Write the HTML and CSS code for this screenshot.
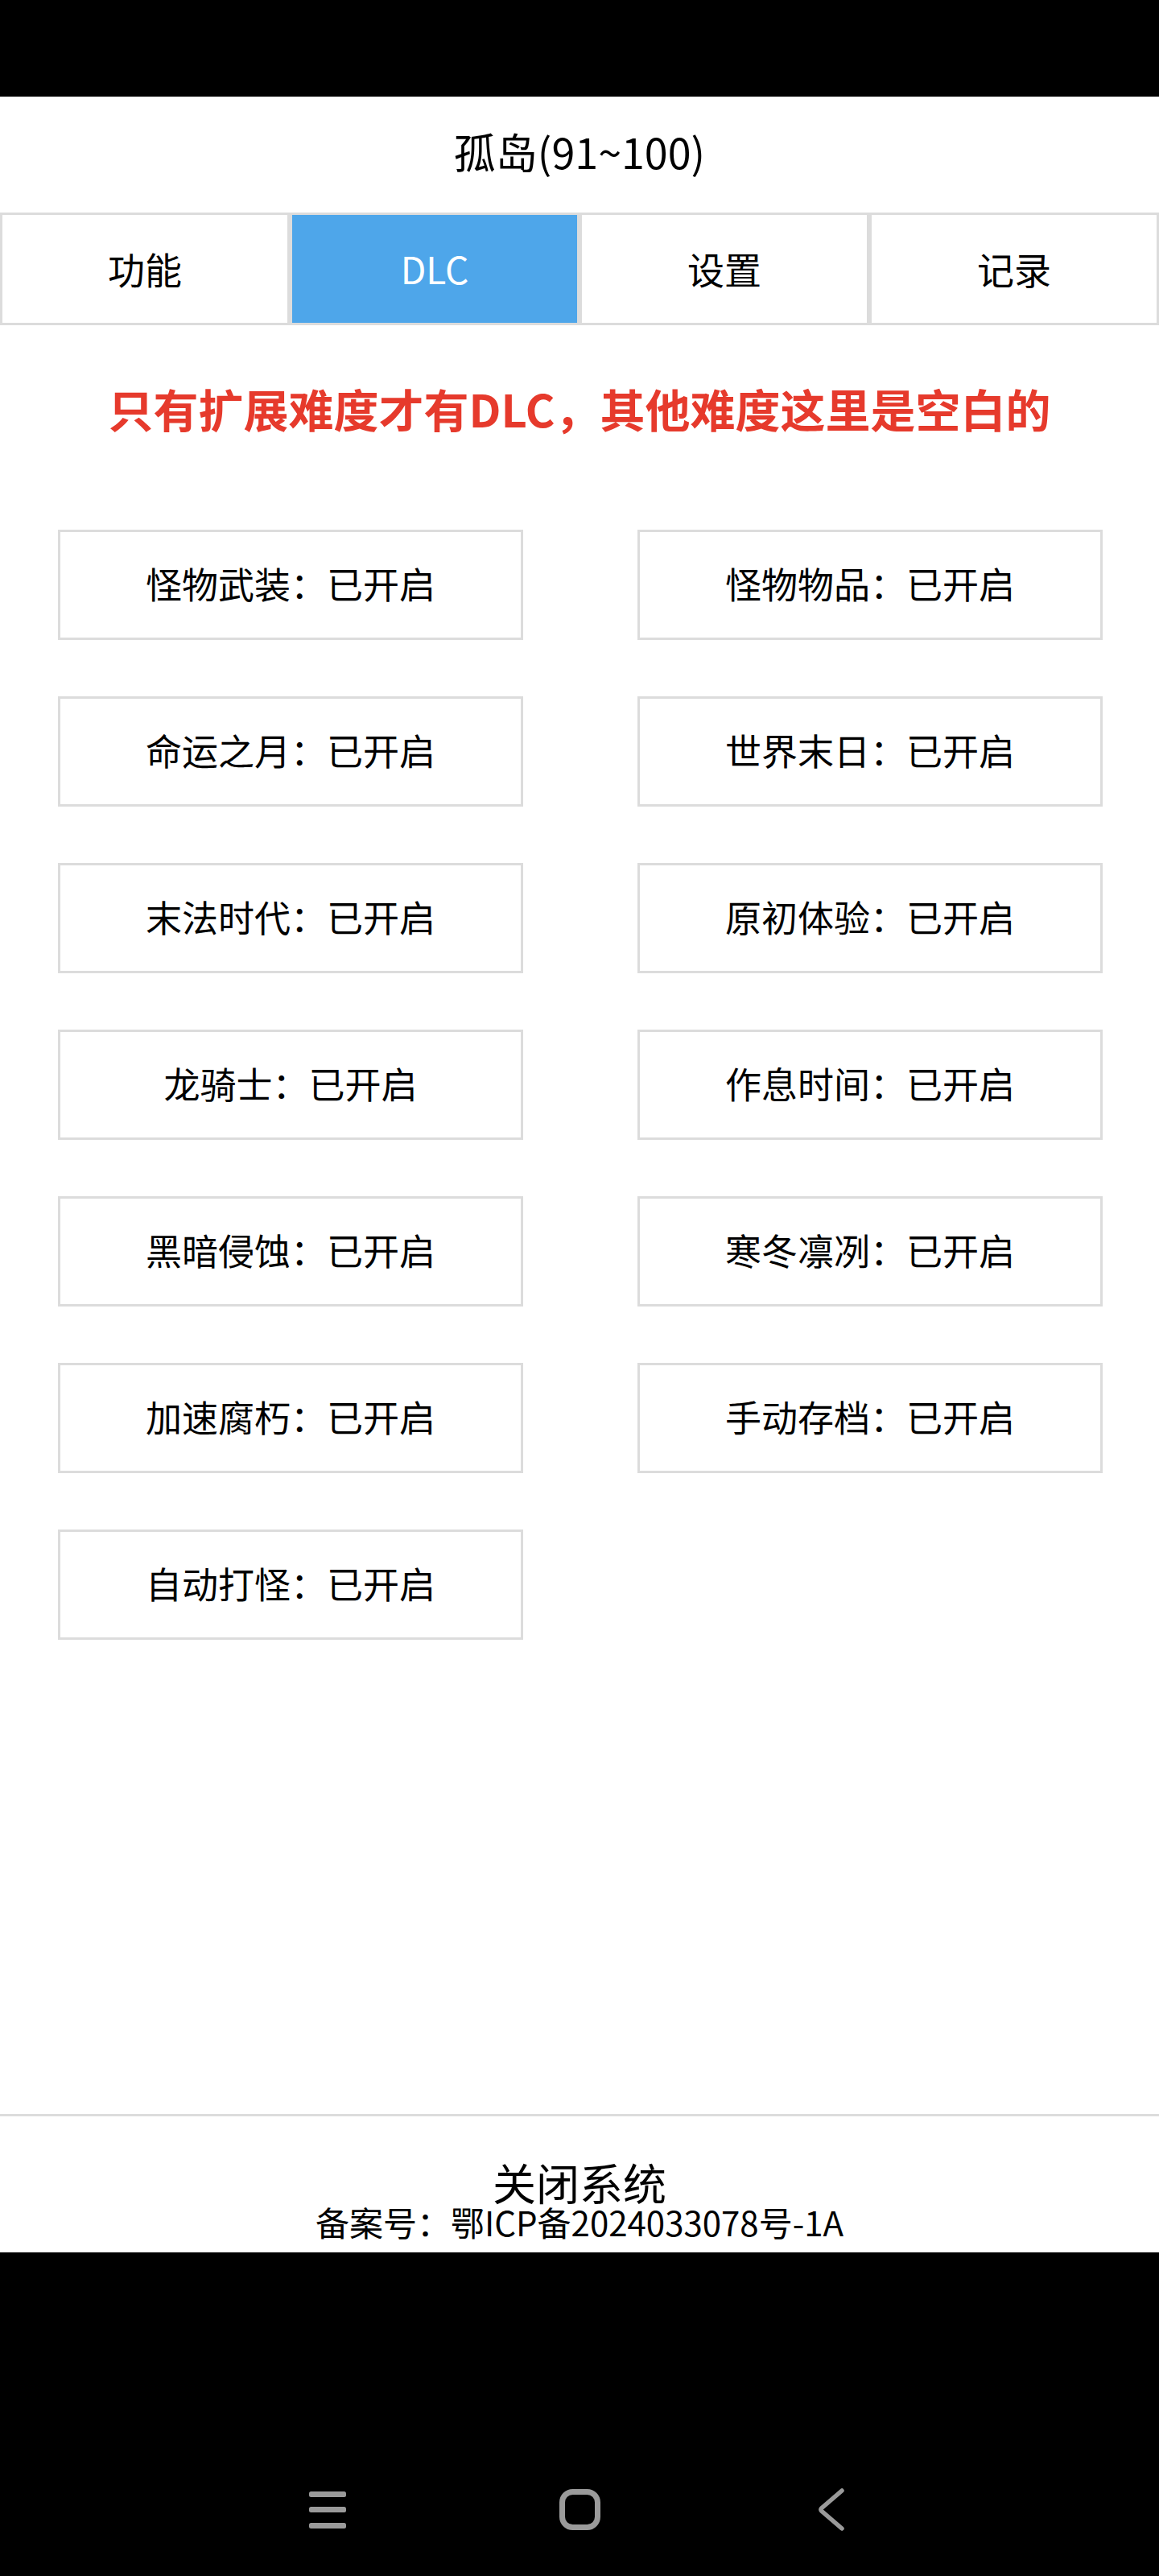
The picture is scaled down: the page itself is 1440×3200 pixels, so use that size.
FILE: index.html
```html
<!DOCTYPE html>
<html lang="zh-CN">
<head>
<meta charset="utf-8">
<title>孤岛(91~100)</title>
<link rel="stylesheet" href="styles.css">
</head>
<body>
<div class="status-bar"></div>
<div class="app">
  <div class="content">
    <div class="title">孤岛(91~100)</div>
    <div class="tabs">
      <div class="tab">功能</div>
      <div class="tab active">DLC</div>
      <div class="tab">设置</div>
      <div class="tab">记录</div>
    </div>
    <div class="notice">只有扩展难度才有DLC，其他难度这里是空白的</div>
    <div class="grid">
      <div class="card">怪物武装：已开启</div>
      <div class="card">怪物物品：已开启</div>
      <div class="card">命运之月：已开启</div>
      <div class="card">世界末日：已开启</div>
      <div class="card">末法时代：已开启</div>
      <div class="card">原初体验：已开启</div>
      <div class="card">龙骑士：已开启</div>
      <div class="card">作息时间：已开启</div>
      <div class="card">黑暗侵蚀：已开启</div>
      <div class="card">寒冬凛冽：已开启</div>
      <div class="card">加速腐朽：已开启</div>
      <div class="card">手动存档：已开启</div>
      <div class="card">自动打怪：已开启</div>
    </div>
  </div>
  <div class="footer">
    <div class="close">关闭系统</div>
    <div class="icp">备案号：鄂ICP备2024033078号-1A</div>
  </div>
</div>
<div class="nav-bar">
  <div class="nav-btn">
    <svg width="46" height="51" viewBox="0 0 46 51">
      <rect x="0" y="3" width="46" height="7" rx="2.5" fill="#9a9a9a"/>
      <rect x="0" y="22" width="46" height="7" rx="2.5" fill="#9a9a9a"/>
      <rect x="0" y="42" width="46" height="7" rx="2.5" fill="#9a9a9a"/>
    </svg>
  </div>
  <div class="nav-btn">
    <svg width="51" height="51" viewBox="0 0 51 51">
      <rect x="3.5" y="3.5" width="44" height="44" rx="13" fill="none" stroke="#9a9a9a" stroke-width="7"/>
    </svg>
  </div>
  <div class="nav-btn">
    <svg width="34" height="53" viewBox="0 0 34 53">
      <path d="M30 3 L5 24.5 Q3 26.5 5 28.5 L30 50" fill="none" stroke="#9a9a9a" stroke-width="5.5" stroke-linecap="round" stroke-linejoin="round"/>
    </svg>
  </div>
</div>
</body>
</html>
```
FILE: styles.css
```css
* {
  box-sizing: border-box;
}
html, body {
  margin: 0;
  padding: 0;
  background: #000;
}
body {
  width: 1440px;
  font-family: "Noto Sans CJK SC", "Noto Sans", sans-serif;
  color: #000;
}
.status-bar {
  height: 120px;
  background: #000;
}
.app {
  height: 2678px;
  background: #fff;
  display: flex;
  flex-direction: column;
}
.content {
  flex: 1;
}
.title {
  height: 144px;
  display: flex;
  align-items: center;
  justify-content: center;
  font-size: 52px;
  line-height: 1;
  padding-bottom: 8px;
}
.tabs {
  display: flex;
}
.tab {
  width: 360px;
  height: 140px;
  border: 3px solid #dcdcdc;
  display: flex;
  align-items: center;
  justify-content: center;
  font-size: 46px;
  line-height: 1;
  padding-bottom: 2px;
}
.tab.active {
  background: #4ea6ea;
  color: #fff;
}
.notice {
  margin-top: 63px;
  height: 80px;
  line-height: 80px;
  text-align: center;
  color: #e63a2c;
  font-size: 56px;
  font-weight: 700;
}
.grid {
  margin-top: 111px;
  padding-left: 72px;
  display: grid;
  grid-template-columns: 578px 578px;
  column-gap: 142px;
  row-gap: 70px;
}
.card {
  height: 137px;
  border: 3px solid #dcdcdc;
  display: flex;
  align-items: center;
  justify-content: center;
  font-size: 45px;
  line-height: 1;
  padding-bottom: 4px;
}
.footer {
  height: 172px;
  border-top: 3px solid #dcdcdc;
  padding-top: 55px;
  text-align: center;
}
.close {
  font-size: 54px;
  line-height: 54px;
}
.icp {
  margin-top: 1px;
  font-size: 42px;
  line-height: 42px;
}
.nav-bar {
  height: 402px;
  background: #000;
  padding-top: 293px;
  display: flex;
  justify-content: center;
  align-items: flex-start;
  gap: 253px;
}
.nav-btn {
  width: 60px;
  height: 53px;
  display: flex;
  align-items: center;
  justify-content: center;
}
```
